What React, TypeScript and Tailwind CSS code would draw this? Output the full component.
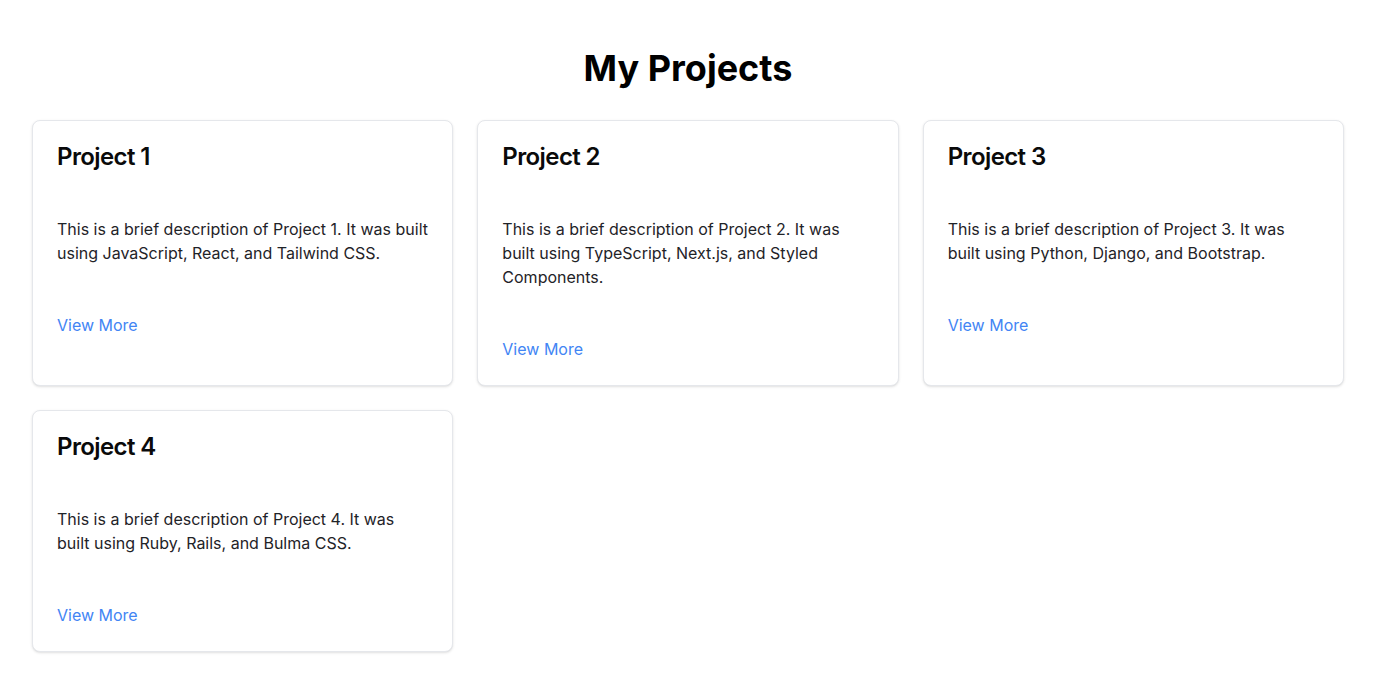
const projects = [
  {
    name: "Project 1",
    description: "This is a brief description of Project 1. It was built using JavaScript, React, and Tailwind CSS.",
  },
  {
    name: "Project 2",
    description: "This is a brief description of Project 2. It was built using TypeScript, Next.js, and Styled Components.",
  },
  {
    name: "Project 3",
    description: "This is a brief description of Project 3. It was built using Python, Django, and Bootstrap.",
  },
  {
    name: "Project 4",
    description: "This is a brief description of Project 4. It was built using Ruby, Rails, and Bulma CSS.",
  },
]

const ProjectCard = ({ name, description }: { name: string; description: string }) => {
  return (
    <div className="flex flex-col items-start rounded-lg border border-[#e5e7eb] bg-white p-6 shadow-sm">
      <h2 className="text-2xl leading-6 font-semibold text-[#0a0a0a] tracking-tight">{name}</h2>
      <p className="mt-12 text-base leading-6 text-[#1f2328]">{description}</p>
      <a href="#" className="mt-12 text-base leading-6 text-[#4285f4]">
        View More
      </a>
    </div>
  )
}

export default function App() {
  return (
    <div className="min-h-screen bg-white px-8 pt-12 pb-12 font-['Inter',sans-serif]">
      <h1 className="mb-8 text-center text-4xl leading-10 font-bold text-black">My Projects</h1>
      <div className="grid grid-cols-3 gap-6">
        {projects.map((p) => (
          <ProjectCard key={p.name} name={p.name} description={p.description} />
        ))}
      </div>
    </div>
  )
}
